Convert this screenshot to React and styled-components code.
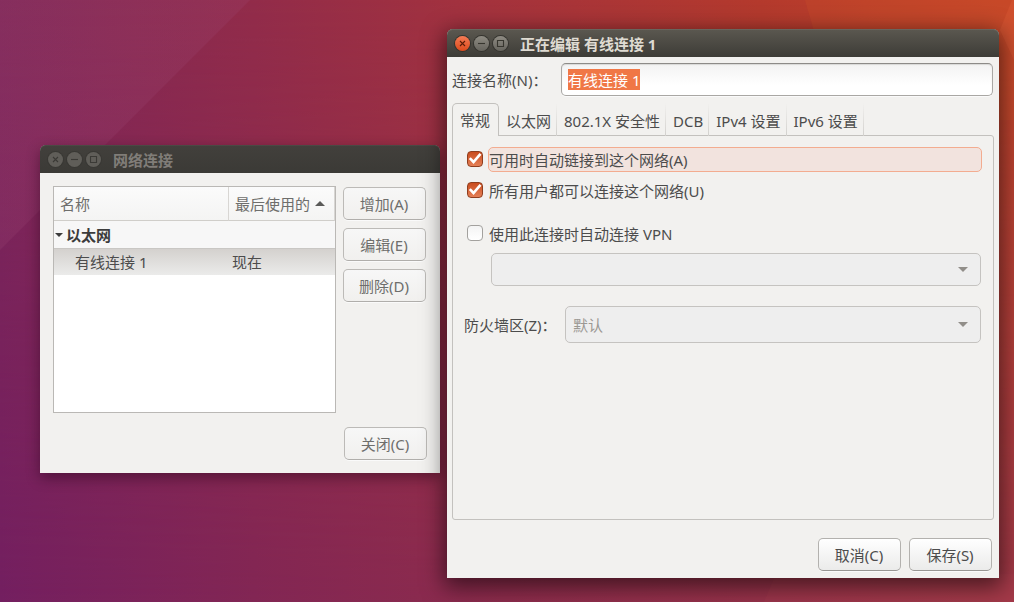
import React, { useEffect, useRef, useState } from "react";
import styled, { createGlobalStyle, css } from "styled-components";

const GlobalStyle = createGlobalStyle`
  *, *::before, *::after { box-sizing: border-box; }
  body {
    margin: 0;
    font-family: "Noto Sans", "Noto Sans CJK SC", sans-serif;
    font-size: 15px;
    line-height: 24px;
    color: #4c4c4c;
  }
  button, input, select { font: inherit; color: inherit; }
`;

/* ---------- desktop ---------- */

const Desktop = styled.main`
  position: relative;
  display: flex;
  align-items: flex-start;
  gap: 7px;
  min-height: 100vh;
  padding: 29px 15px 24px 40px;
  overflow: hidden;
`;

const WallpaperSvg = styled.svg`
  position: absolute;
  inset: 0;
  width: 100%;
  height: 100%;
`;

function Wallpaper() {
  return (
    <WallpaperSvg viewBox="0 0 1014 602" preserveAspectRatio="none" aria-hidden="true">
      <defs>
        <linearGradient id="upper" x1="0" x2="1" y1="0" y2="0">
          <stop offset="0" stopColor="#7f2757" />
          <stop offset="0.25" stopColor="#922c4a" />
          <stop offset="0.45" stopColor="#a2323f" />
          <stop offset="0.75" stopColor="#b43a2d" />
          <stop offset="1" stopColor="#c54628" />
        </linearGradient>
        <linearGradient id="lower" x1="0" x2="1" y1="0" y2="0">
          <stop offset="0" stopColor="#731f60" />
          <stop offset="0.25" stopColor="#822654" />
          <stop offset="0.5" stopColor="#8d2c4c" />
          <stop offset="1" stopColor="#a03848" />
        </linearGradient>
        <linearGradient id="fade" x1="0" x2="0" y1="0" y2="1">
          <stop offset="0" stopColor="#000" />
          <stop offset="1" stopColor="#fff" />
        </linearGradient>
        <mask id="downwards">
          <rect width="1014" height="602" fill="url(#fade)" />
        </mask>
        <linearGradient id="facet" x1="0" x2="1" y1="0" y2="1">
          <stop offset="0" stopColor="#a04a78" stopOpacity="0.22" />
          <stop offset="1" stopColor="#a04a78" stopOpacity="0.18" />
        </linearGradient>
      </defs>
      <rect width="1014" height="602" fill="url(#upper)" />
      <rect width="1014" height="602" fill="url(#lower)" mask="url(#downwards)" />
      <polygon points="0,0 250,0 0,250" fill="url(#facet)" />
      <polygon points="805,0 1014,0 1014,120 840,120" fill="#d0582a" fillOpacity="0.22" />
      <polygon points="1014,0 1014,60 1000,30 1012,0" fill="#e0603a" fillOpacity="0.3" />
      <polygon points="776,574 764,602 1014,602 1014,574" fill="#b04050" fillOpacity="0.2" />
    </WallpaperSvg>
  );
}

/* ---------- window frame ---------- */

const Window = styled.section`
  position: relative;
  flex: ${(p) => p.$grow} 1 0;
  min-width: 0;
  margin-top: ${(p) => p.$drop || 0}px;
  border-radius: 6px 6px 0 0;
  background: #f2f1ef;
  box-shadow: ${(p) =>
    p.$active
      ? "0 6px 22px 3px rgba(0, 0, 0, 0.55)"
      : "0 5px 14px rgba(30, 0, 20, 0.45)"};
  color: ${(p) => (p.$active ? "#4c4c4c" : "#6e6e6c")};
`;

const TitleBar = styled.header`
  display: flex;
  align-items: center;
  gap: 4px;
  height: 28px;
  padding: 0 8px;
  border-radius: 6px 6px 0 0;
  background: ${(p) =>
    p.$active
      ? "linear-gradient(#5b5850, #3d3c37)"
      : "linear-gradient(#42403c, #3b3a36)"};
  box-shadow: inset 0 1px 0 ${(p) => (p.$active ? "#68655d" : "#4b4944")};
`;

const TitleText = styled.h1`
  margin: 2px 0 0 8px;
  font-size: 15px;
  line-height: 24px;
  font-weight: 700;
  color: ${(p) => (p.$active ? "#dfdbd2" : "#807d78")};
`;

const TitleButton = styled.button`
  display: block;
  width: 15px;
  height: 15px;
  padding: 0;
  border: 0;
  border-radius: 50%;
  box-shadow: 0 0 0 1px ${(p) => (p.$active ? "#35342f" : "#393834")};
  background: ${(p) =>
    !p.$active
      ? "#605e59"
      : p.$close
        ? "linear-gradient(#f47b55, #dd4a1b)"
        : "linear-gradient(#8e8b83, #66645d)"};
  color: ${(p) => (p.$active ? (p.$close ? "#5c1d08" : "#37362f") : "#3b3a36")};

  svg { display: block; }
`;

const glyphs = {
  close: <path d="M5 5l5 5M10 5l-5 5" />,
  minimize: <path d="M4 7.5h7" />,
  maximize: <path d="M4.5 4.5h6v6h-6z" />,
};

function WindowTitle({ active, children }) {
  const labels = { close: "关闭", minimize: "最小化", maximize: "最大化" };
  return (
    <TitleBar $active={active}>
      {Object.keys(glyphs).map((kind) => (
        <TitleButton
          key={kind}
          type="button"
          aria-label={labels[kind]}
          $active={active}
          $close={kind === "close"}
        >
          <svg width="15" height="15" viewBox="0 0 15 15" fill="none" stroke="currentColor" strokeWidth="1.1">
            {glyphs[kind]}
          </svg>
        </TitleButton>
      ))}
      <TitleText $active={active}>{children}</TitleText>
    </TitleBar>
  );
}

const PushButton = styled.button`
  width: 83px;
  height: 33px;
  padding: 0 1px 0 0;
  border: 1px solid ${(p) => (p.$dim ? "#bcbab7" : "#b3b1ae")};
  border-bottom-color: ${(p) => (p.$dim ? "#b0aeab" : "#989693")};
  border-radius: 5px;
  background: ${(p) =>
    p.$dim
      ? "linear-gradient(#f7f7f7, #f1f0ee)"
      : "linear-gradient(#ffffff, #ebebea)"};
  box-shadow: 0 1px 0 #fafafa;
  text-align: center;
`;

/* ---------- connection list ---------- */

const ListBody = styled.div`
  display: flex;
  gap: 7px;
  padding: 13px 14px 0 13px;
`;

const ListFrame = styled.div`
  flex: 1;
  min-height: 227px;
  border: 1px solid #bab8b5;
  background: #fff;
`;

const ConnectionTable = styled.table`
  width: 100%;
  table-layout: fixed;
  border-collapse: separate;
  border-spacing: 0;
`;

const HeadCell = styled.th`
  width: ${(p) => p.$width || "auto"};
  height: 34px;
  padding: 0 0 0 6px;
  border-bottom: 1px solid #d0ceca;
  border-right: 1px solid #d8d6d3;
  background: linear-gradient(#fbfbfb, #f4f4f3);
  font-weight: 400;
  text-align: left;
  white-space: nowrap;
`;

const SortArrow = styled.svg`
  margin-left: 5px;
  vertical-align: 4px;
`;

const GroupCell = styled.th`
  height: 27px;
  padding: 0 0 0 1px;
  background: #f7f7f7;
  color: #3c3c3c;
  font-weight: 700;
  line-height: 24px;
  text-align: left;
`;

const Expander = styled.svg`
  margin-right: 3px;
  vertical-align: 4px;
`;

const ItemRow = styled.tr`
  background: linear-gradient(#d3d0cd, #ebebea);
  color: #4c4c4c;
`;

const ItemCell = styled.td`
  height: 27px;
  padding: 0 0 0 ${(p) => p.$indent}px;
  border-top: 1px solid #c9c7c4;
`;

const ButtonColumn = styled.div`
  display: flex;
  flex-direction: column;
  gap: 8px;
  padding-top: 1px;
`;

const ListFooter = styled.footer`
  display: flex;
  justify-content: flex-end;
  padding: 14px 13px 13px;
`;

function ConnectionsWindow() {
  return (
    <Window $grow={400} $drop={116} aria-label="网络连接">
      <WindowTitle active={false}>网络连接</WindowTitle>
      <ListBody>
        <ListFrame>
          <ConnectionTable>
            <thead>
              <tr>
                <HeadCell scope="col">名称</HeadCell>
                <HeadCell scope="col" $width="106px" aria-sort="ascending">
                  最后使用的
                  <SortArrow width="10" height="5" viewBox="0 0 10 5" aria-hidden="true">
                    <path d="M0 5L5 0l5 5z" fill="#5a5a58" />
                  </SortArrow>
                </HeadCell>
              </tr>
            </thead>
            <tbody>
              <tr>
                <GroupCell colSpan={2} scope="rowgroup">
                  <Expander width="8" height="4" viewBox="0 0 8 4" aria-hidden="true">
                    <path d="M0 0h8L4 4z" fill="#3c3c3c" />
                  </Expander>
                  以太网
                </GroupCell>
              </tr>
              <ItemRow aria-selected="true">
                <ItemCell $indent={21}>有线连接 1</ItemCell>
                <ItemCell $indent={3}>现在</ItemCell>
              </ItemRow>
            </tbody>
          </ConnectionTable>
        </ListFrame>
        <ButtonColumn>
          <PushButton type="button" $dim>增加(A)</PushButton>
          <PushButton type="button" $dim>编辑(E)</PushButton>
          <PushButton type="button" $dim>删除(D)</PushButton>
        </ButtonColumn>
      </ListBody>
      <ListFooter>
        <PushButton type="button" $dim>关闭(C)</PushButton>
      </ListFooter>
    </Window>
  );
}

/* ---------- connection editor ---------- */

const EditorBody = styled.form`
  padding: 6px 5px 7px;
`;

const Field = styled.div`
  display: flex;
  align-items: center;
  padding-right: ${(p) => p.$end || 0}px;
`;

const FieldLabel = styled.label`
  flex: none;
  width: ${(p) => p.$width}px;
  white-space: nowrap;
`;

const TextEntry = styled.input`
  flex: 1;
  min-width: 0;
  height: 33px;
  padding: 0 6px 1px;
  border: 1px solid #a9a7a4;
  border-top-color: #8d8b88;
  border-radius: 5px;
  outline: 0;
  background: linear-gradient(#f3f3f3, #ffffff 70%);
  box-shadow: inset 0 1px 1px #d9d9d8, 0 1px 0 #fafafa;
  line-height: 24px;
  caret-color: transparent;

  &::selection { background: #f07746; color: #fff; }
`;

const TabList = styled.div`
  display: flex;
  position: relative;
  margin: 7px 0 -1px;
`;

const Tab = styled.button`
  height: 33px;
  padding: 2px 6px 0 7px;
  border: 0;
  background: linear-gradient(#f2f1ef, #d2d0cd) right / 1px 100% no-repeat;
  white-space: nowrap;

  ${(p) =>
    p.$current &&
    css`
      padding: 0 8px 0 7px;
      border: 1px solid #c3c1be;
      border-bottom: 0;
      border-radius: 5px 5px 0 0;
      background: #f2f1ef;
    `}
`;

const TabPanel = styled.div`
  min-height: 385px;
  padding: 11px 11px 0;
  border: 1px solid #c3c1be;
  border-radius: 0 3px 3px 3px;
`;

const CheckRow = styled.label`
  display: flex;
  align-items: center;
  gap: 5px;
  margin: 0 0 ${(p) => p.$below}px 3px;
`;

const CheckBoxCell = styled.span`
  display: grid;
  flex: none;
  margin-bottom: 2px;

  > * { grid-area: 1 / 1; }
`;

const CheckInput = styled.input`
  appearance: none;
  width: 16px;
  height: 16px;
  margin: 0;
  border: 1px solid #a3a19e;
  border-radius: 4px;
  outline: 0;
  background: linear-gradient(#f4f4f4, #ffffff);

  &:checked {
    border-color: #8f3e1f;
    background: linear-gradient(#c94c1e, #e58057);
  }
`;

const CheckMark = styled.svg`
  pointer-events: none;
`;

const CheckText = styled.span`
  flex: 1;
  height: 25px;
  padding: 1px 0 0;
  border: 1px solid ${(p) => (p.$focused ? "#f3ac90" : "transparent")};
  border-radius: 5px;
  background: ${(p) => (p.$focused ? "#f2e3de" : "transparent")};
  line-height: 23px;
  white-space: nowrap;
`;

function CheckOption({ label, initial, focused, below }) {
  const [checked, setChecked] = useState(initial);
  return (
    <CheckRow $below={below}>
      <CheckBoxCell>
        <CheckInput type="checkbox" checked={checked} onChange={(e) => setChecked(e.target.checked)} />
        {checked && (
          <CheckMark width="16" height="16" viewBox="0 0 16 16" fill="none" aria-hidden="true">
            <path d="M2.800 7.200L6.500 11 13.500 2.800" stroke="#fff" strokeWidth="2.600" />
          </CheckMark>
        )}
      </CheckBoxCell>
      <CheckText $focused={focused}>{label}</CheckText>
    </CheckRow>
  );
}

const SelectCell = styled.div`
  display: grid;
  flex: 1;
  align-items: center;
  margin: ${(p) => p.$margin || "0"};

  > * { grid-area: 1 / 1; }
`;

const SelectBox = styled.select`
  appearance: none;
  width: 100%;
  height: ${(p) => p.$height}px;
  padding: 0 28px 0 7px;
  border: 1px solid #c5c3c0;
  border-radius: 5px;
  background: #eeeeee;
  color: #9b9893;
  opacity: 1;
`;

const SelectArrow = styled.svg`
  justify-self: end;
  margin-right: 13px;
  pointer-events: none;
`;

function Select({ id, label, value, height, margin }) {
  return (
    <SelectCell $margin={margin}>
      <SelectBox id={id} aria-label={label} $height={height} disabled defaultValue={value}>
        <option value={value}>{value}</option>
      </SelectBox>
      <SelectArrow width="10" height="5" viewBox="0 0 10 5" aria-hidden="true">
        <path d="M0 0h10L5 5z" fill="#918e89" />
      </SelectArrow>
    </SelectCell>
  );
}

const EditorFooter = styled.footer`
  display: flex;
  justify-content: flex-end;
  gap: 8px;
  padding: 18px 2px 0 0;
`;

const tabs = ["常规", "以太网", "802.1X 安全性", "DCB", "IPv4 设置", "IPv6 设置"];

function EditorWindow() {
  const nameRef = useRef(null);
  const [current, setCurrent] = useState(0);

  useEffect(() => {
    nameRef.current.focus();
    nameRef.current.select();
  }, []);

  return (
    <Window $grow={552} $active aria-label="正在编辑 有线连接 1">
      <WindowTitle active>正在编辑 有线连接 1</WindowTitle>
      <EditorBody onSubmit={(e) => e.preventDefault()}>
        <Field $end={1}>
          <FieldLabel htmlFor="connection-name" $width={109}>连接名称(N)：</FieldLabel>
          <TextEntry ref={nameRef} id="connection-name" type="text" defaultValue="有线连接 1" />
        </Field>
        <TabList role="tablist">
          {tabs.map((name, i) => (
            <Tab
              key={name}
              type="button"
              role="tab"
              aria-selected={i === current}
              $current={i === current}
              onClick={() => setCurrent(i)}
            >
              {name}
            </Tab>
          ))}
        </TabList>
        <TabPanel role="tabpanel">
          <CheckOption label="可用时自动链接到这个网络(A)" initial focused below={6} />
          <CheckOption label="所有用户都可以连接这个网络(U)" initial below={18} />
          <CheckOption label="使用此连接时自动连接 VPN" initial={false} below={7} />
          <Select label="VPN" value="" height={33} margin="0 1px 20px 27px" />
          <Field $end={1}>
            <FieldLabel htmlFor="zone" $width={101}>防火墙区(Z)：</FieldLabel>
            <Select id="zone" value="默认" height={37} />
          </Field>
        </TabPanel>
        <EditorFooter>
          <PushButton type="button">取消(C)</PushButton>
          <PushButton type="submit">保存(S)</PushButton>
        </EditorFooter>
      </EditorBody>
    </Window>
  );
}

export default function App() {
  return (
    <>
      <GlobalStyle />
      <Desktop>
        <Wallpaper />
        <ConnectionsWindow />
        <EditorWindow />
      </Desktop>
    </>
  );
}
